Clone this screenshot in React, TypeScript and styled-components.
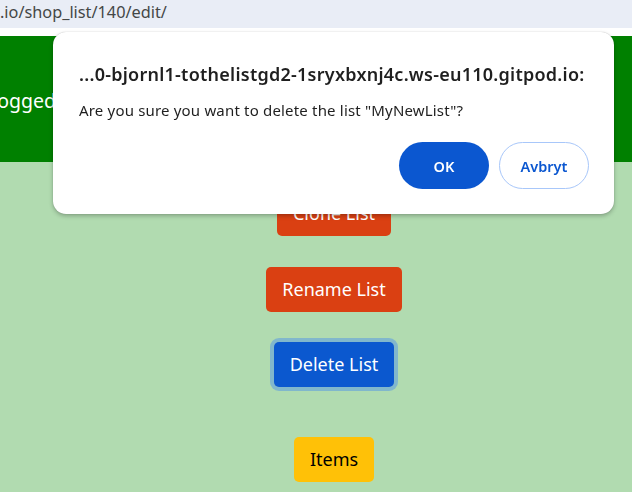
import React from "react";
import styled, { createGlobalStyle } from "styled-components";

const Global = createGlobalStyle`
  html, body { margin: 0; padding: 0; }
  body {
    width: 632px;
    height: 492px;
    overflow: hidden;
    background: #b1dbb0;
    font-family: "Noto Sans", "Open Sans", sans-serif;
  }
`;

const AddressBar = styled.div`
  height: 28px;
  background: #e9edf6;
  color: #444746;
  font-size: 16.3px;
  line-height: 25px;
  white-space: nowrap;
  overflow: hidden;
`;

const Spacer = styled.div`
  height: 8px;
  background: #ffffff;
`;

const Header = styled.header`
  height: 126px;
  background: #008000;
  color: #ffffff;
  display: flex;
  align-items: center;
  font-size: 19.5px;
  white-space: nowrap;
  overflow: hidden;
`;

const HeaderText = styled.span`
  margin-left: -13px;
  margin-top: 2px;
`;

const Content = styled.main`
  display: flex;
  flex-direction: column;
  align-items: center;
  padding: 29px 0 0 36px;
`;

const Btn = styled.button<{ $bg: string; $fg: string; $mt: number; $focus?: boolean }>`
  margin-top: ${(p) => p.$mt}px;
  height: 45px;
  padding: 0 16px;
  border: none;
  border-radius: 5px;
  background: ${(p) => p.$bg};
  color: ${(p) => p.$fg};
  font-family: "Noto Sans", "Open Sans", sans-serif;
  font-size: 18px;
  line-height: 45px;
  cursor: pointer;
  box-shadow: ${(p) => (p.$focus ? "0 0 0 4px rgba(70, 140, 240, 0.45)" : "none")};
`;

const Dialog = styled.div`
  position: fixed;
  left: 53px;
  top: 32px;
  width: 561px;
  height: 182px;
  box-sizing: border-box;
  background: #ffffff;
  border-radius: 13px;
  box-shadow: 0 2px 4px rgba(0, 0, 0, 0.25), 0 0 1px rgba(0, 0, 0, 0.3);
  padding: 29px 25px 25px 26px;
  display: flex;
  flex-direction: column;
`;

const Title = styled.div`
  font-size: 18px;
  font-weight: 600;
  color: #1f1f1f;
  line-height: 26px;
  white-space: nowrap;
  letter-spacing: 0.25px;
`;

const Message = styled.div`
  margin-top: 13px;
  font-size: 15px;
  color: #1f1f1f;
  line-height: 20px;
  letter-spacing: 0.18px;
  white-space: nowrap;
`;

const Actions = styled.div`
  margin-top: auto;
  display: flex;
  justify-content: flex-end;
  gap: 10px;
`;

const DialogButton = styled.button<{ $primary?: boolean }>`
  width: 90px;
  height: 47px;
  box-sizing: border-box;
  border-radius: 24px;
  font-family: "Noto Sans", "Open Sans", sans-serif;
  font-size: 14.5px;
  font-weight: 600;
  cursor: pointer;
  border: ${(p) => (p.$primary ? "none" : "1px solid #a8c7fa")};
  background: ${(p) => (p.$primary ? "#0b57d0" : "#ffffff")};
  color: ${(p) => (p.$primary ? "#ffffff" : "#0b57d0")};
`;

export default function App() {
  return (
    <>
      <Global />
      <AddressBar>.io/shop_list/140/edit/</AddressBar>
      <Spacer />
      <Header>
        <HeaderText>Logged in as bjornl1</HeaderText>
      </Header>
      <Content>
        <Btn $bg="#da4012" $fg="#ffffff" $mt={0}>Clone List</Btn>
        <Btn $bg="#da4012" $fg="#ffffff" $mt={31}>Rename List</Btn>
        <Btn $bg="#0b58cf" $fg="#ffffff" $mt={30} $focus>Delete List</Btn>
        <Btn $bg="#ffc107" $fg="#000000" $mt={50}>Items</Btn>
      </Content>
      <Dialog role="dialog">
        <Title>...0-bjornl1-tothelistgd2-1sryxbxnj4c.ws-eu110.gitpod.io:</Title>
        <Message>Are you sure you want to delete the list "MyNewList"?</Message>
        <Actions>
          <DialogButton $primary>OK</DialogButton>
          <DialogButton>Avbryt</DialogButton>
        </Actions>
      </Dialog>
    </>
  );
}
